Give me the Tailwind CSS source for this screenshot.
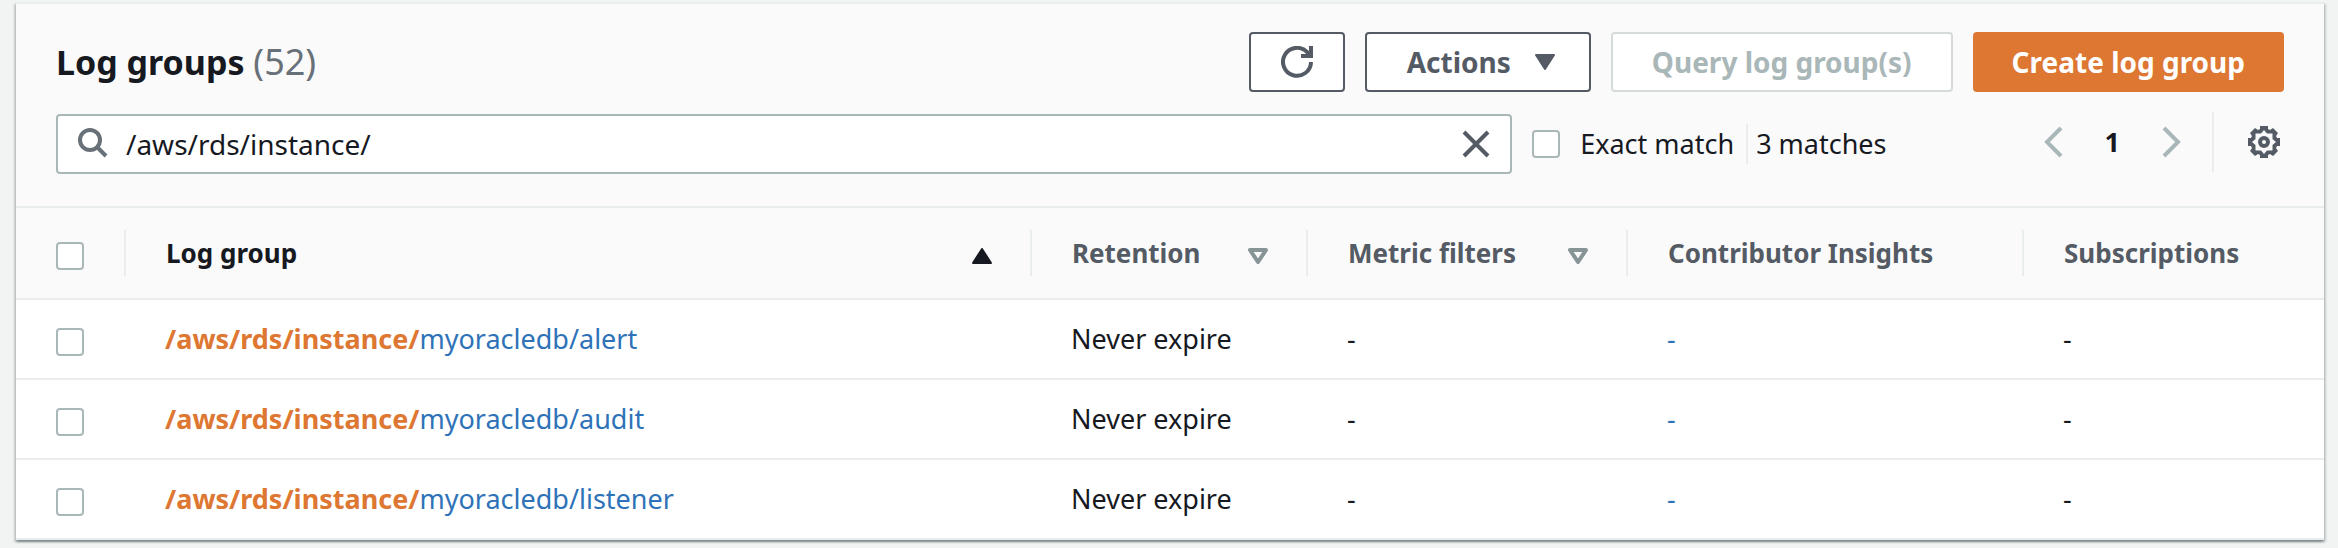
<!DOCTYPE html>
<html lang="en">
<head>
<meta charset="utf-8">
<title>Log groups</title>
<script src="https://cdn.jsdelivr.net/npm/@tailwindcss/browser@4"></script>
</head>
<body class="bg-[#f2f3f3] font-['Noto_Sans','Open_Sans',sans-serif] text-[27px] leading-9 text-[#16191f]">
<main class="pt-0.5 pr-3.5 pb-2 pl-4">
<section class="border-t-2 border-[#eaeded] bg-white shadow-[0_2px_2px_0_rgba(0,28,36,0.3),2px_2px_2px_0_rgba(0,28,36,0.15),-2px_2px_2px_0_rgba(0,28,36,0.15)]">
  <header class="border-b-2 border-[#eaeded] bg-[#fafafa] px-10 pt-7 pb-8">
    <div class="flex items-center gap-5">
      <h2 class="mr-auto text-[34px] leading-[60px] font-bold">Log groups <span class="text-[36px] font-normal text-[#687078]">(52)</span></h2>
      <button type="button" aria-label="Refresh" class="flex h-[60px] w-24 items-center justify-center rounded-[4px] border-2 border-[#545b64] bg-white text-[#545b64]">
        <svg class="size-8" viewBox="0 0 32 32" fill="none" stroke="currentColor" stroke-width="4"><path d="M30 16a14 14 0 1 1-4-10l4 4"/><path d="M30 0v10H20"/></svg>
      </button>
      <button type="button" class="flex h-[60px] items-center gap-6 rounded-[4px] border-2 border-[#545b64] bg-white pr-[34px] pl-10 text-[28px] font-bold text-[#545b64]">Actions
        <svg class="h-4 w-5" viewBox="0 0 20 16" fill="currentColor" stroke="currentColor" stroke-width="2" stroke-linejoin="round"><path d="M1 1h18l-9 14z"/></svg>
      </button>
      <button type="button" disabled class="h-[60px] rounded-[4px] border-2 border-[#d5dbdb] bg-white px-[39px] text-[28px] font-bold text-[#aab7b8]">Query log group(s)</button>
      <button type="button" class="h-[60px] rounded-[4px] bg-[#dd7732] px-[39px] text-[28px] font-bold text-white">Create log group</button>
    </div>
    <div class="mt-[22px] flex h-[60px] items-center">
      <div class="flex h-full flex-1 items-center rounded-[4px] border-2 border-[#aab7b8] bg-white px-5">
        <svg class="size-8 shrink-0" viewBox="0 0 32 32" fill="none" stroke="#687078" stroke-width="4"><circle cx="12" cy="12" r="10"/><path d="M19 19l9 9"/></svg>
        <input type="text" aria-label="Filter log groups" value="/aws/rds/instance/" class="ml-4 h-full min-w-0 flex-1 bg-transparent text-[28px] outline-none">
        <button type="button" aria-label="Clear filter"><svg class="size-7" viewBox="0 0 28 28" fill="none" stroke="#545b64" stroke-width="4"><path d="M2 2l24 24M26 2L2 26"/></svg></button>
      </div>
      <input id="exact" type="checkbox" class="ml-5 size-7 appearance-none rounded-[4px] border-2 border-[#aab7b8] bg-white">
      <label for="exact" class="ml-5">Exact match</label>
      <span class="ml-3 h-10 w-0.5 bg-[#eaeded]"></span>
      <span class="ml-2">3 matches</span>
      <nav aria-label="Pages" class="mb-1 ml-[156px] flex items-center gap-[42px]">
        <button type="button" aria-label="Previous page"><svg class="h-8 w-5" viewBox="0 0 20 32" fill="none" stroke="#aab7b8" stroke-width="4"><path d="M18 2L4 16l14 14"/></svg></button>
        <button type="button" class="font-bold">1</button>
        <button type="button" aria-label="Next page"><svg class="h-8 w-5" viewBox="0 0 20 32" fill="none" stroke="#aab7b8" stroke-width="4"><path d="M2 2l14 14L2 30"/></svg></button>
      </nav>
      <span class="mb-1 ml-[30px] h-[60px] w-0.5 bg-[#eaeded]"></span>
      <button type="button" aria-label="Preferences" class="mr-1 mb-1 ml-[34px]"><svg class="size-8" viewBox="0 0 32 32"><path fill="#545b64" fill-rule="evenodd" d="M12 0h8v3l2 1 3-2 5 5-2 3 1 2h3v8h-3l-1 2 2 3-5 5-3-2-2 1v3h-8v-3l-2-1-3 2-5-5 2-3-1-2H0v-8h3l1-2-2-3 5-5 3 2 2-1zM16 4l-3 3.500H7.500V13L4 16l3.500 3v5.500H13l3 3.500 3-3.500h5.500V19l3.500-3-3.500-3V7.500H19z"/><circle cx="16" cy="16" r="4" fill="none" stroke="#545b64" stroke-width="4"/></svg></button>
    </div>
  </header>
  <table class="w-full table-fixed border-separate border-spacing-0 text-left">
    <colgroup><col class="w-[110px]"><col><col class="w-[276px]"><col class="w-[320px]"><col class="w-[396px]"><col class="w-[300px]"></colgroup>
    <thead class="bg-[#fafafa] text-[26px] text-[#545b64]">
      <tr class="h-[92px]">
        <th class="border-b-2 border-[#eaeded] p-0"><div class="flex h-[46px] items-center border-r-2 border-[#eaeded] pl-10"><input type="checkbox" aria-label="Select all" class="mt-1.5 size-7 appearance-none rounded-[4px] border-2 border-[#aab7b8] bg-white"></div></th>
        <th class="border-b-2 border-[#eaeded] p-0"><div class="flex h-[46px] items-center justify-between border-r-2 border-[#eaeded] pr-[38px] pl-10 text-[#16191f]">Log group <svg class="mt-1.5 h-4 w-5" viewBox="0 0 20 16" fill="currentColor" stroke="currentColor" stroke-width="2" stroke-linejoin="round"><path d="M1 15h18L10 1z"/></svg></div></th>
        <th class="border-b-2 border-[#eaeded] p-0"><div class="flex h-[46px] items-center justify-between border-r-2 border-[#eaeded] pr-[38px] pl-10">Retention <svg class="mt-1.5 h-4 w-5" viewBox="0 0 20 16" fill="none" stroke="#879596" stroke-width="4" stroke-linejoin="round"><path d="M2 2h16l-8 12z"/></svg></div></th>
        <th class="border-b-2 border-[#eaeded] p-0"><div class="flex h-[46px] items-center justify-between border-r-2 border-[#eaeded] pr-[38px] pl-10">Metric filters <svg class="mt-1.5 h-4 w-5" viewBox="0 0 20 16" fill="none" stroke="#879596" stroke-width="4" stroke-linejoin="round"><path d="M2 2h16l-8 12z"/></svg></div></th>
        <th class="border-b-2 border-[#eaeded] p-0"><div class="flex h-[46px] items-center border-r-2 border-[#eaeded] pl-10">Contributor Insights</div></th>
        <th class="border-b-2 border-[#eaeded] p-0"><div class="flex h-[46px] items-center pl-10">Subscriptions</div></th>
      </tr>
    </thead>
    <tbody>
      <tr class="h-20 [&>td]:border-b-2 [&>td]:border-[#eaeded] [&>td]:py-0 [&>td]:pr-0 [&>td]:pl-[39px] [&>td:first-child]:pl-10">
        <td><input type="checkbox" aria-label="Select alert" class="mt-1.5 block size-7 appearance-none rounded-[4px] border-2 border-[#aab7b8] bg-white"></td>
        <td><a href="#alert" class="text-[#2e73b8]"><b class="text-[#dd7732]">/aws/rds/instance/</b>myoracledb/alert</a></td>
        <td>Never expire</td><td>-</td><td><a href="#insights" class="text-[#2e73b8]">-</a></td><td>-</td>
      </tr>
      <tr class="h-20 [&>td]:border-b-2 [&>td]:border-[#eaeded] [&>td]:py-0 [&>td]:pr-0 [&>td]:pl-[39px] [&>td:first-child]:pl-10">
        <td><input type="checkbox" aria-label="Select audit" class="mt-1.5 block size-7 appearance-none rounded-[4px] border-2 border-[#aab7b8] bg-white"></td>
        <td><a href="#audit" class="text-[#2e73b8]"><b class="text-[#dd7732]">/aws/rds/instance/</b>myoracledb/audit</a></td>
        <td>Never expire</td><td>-</td><td><a href="#insights" class="text-[#2e73b8]">-</a></td><td>-</td>
      </tr>
      <tr class="h-20 [&>td]:border-b-2 [&>td]:border-[#eaeded] [&>td]:py-0 [&>td]:pr-0 [&>td]:pl-[39px] [&>td:first-child]:pl-10">
        <td><input type="checkbox" aria-label="Select listener" class="mt-1.5 block size-7 appearance-none rounded-[4px] border-2 border-[#aab7b8] bg-white"></td>
        <td><a href="#listener" class="text-[#2e73b8]"><b class="text-[#dd7732]">/aws/rds/instance/</b>myoracledb/listener</a></td>
        <td>Never expire</td><td>-</td><td><a href="#insights" class="text-[#2e73b8]">-</a></td><td>-</td>
      </tr>
    </tbody>
  </table>
</section>
</main>
</body>
</html>
